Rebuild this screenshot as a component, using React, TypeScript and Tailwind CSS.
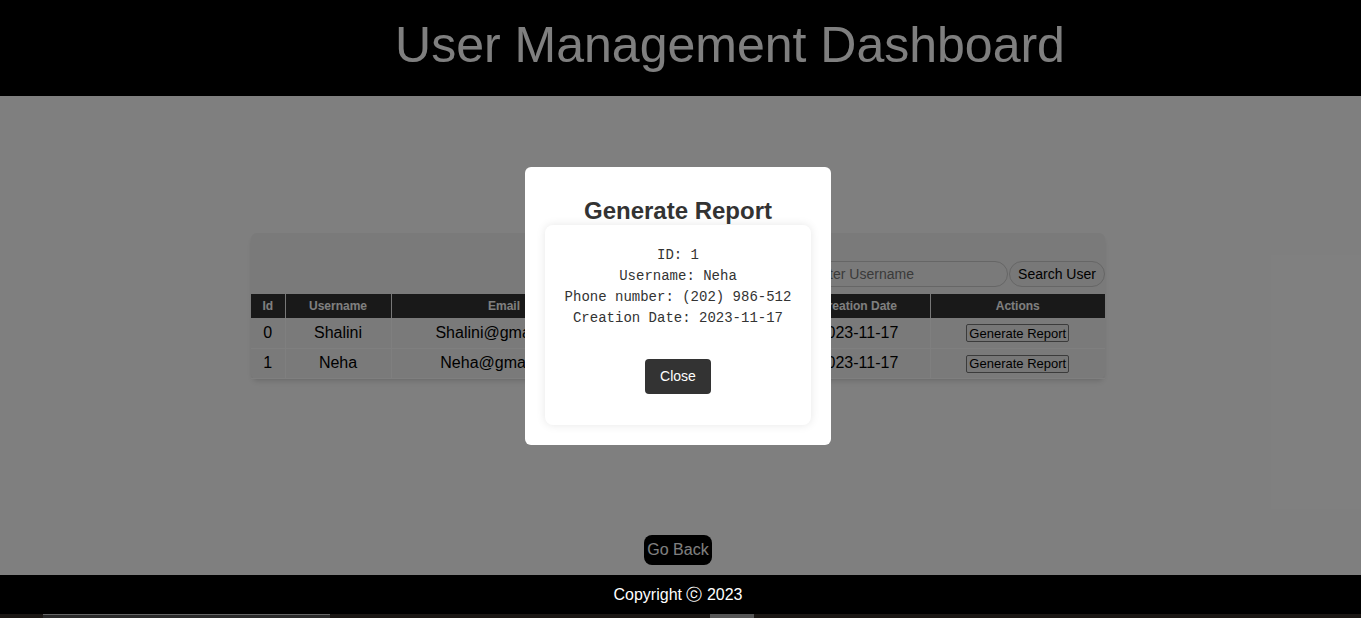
import React from 'react';

const users = [
  { id: 0, username: 'Shalini', email: 'Shalini@gmail.com', phone: '(202) 555-0143', date: '2023-11-17' },
  { id: 1, username: 'Neha', email: 'Neha@gmail.com', phone: '(202) 986-512', date: '2023-11-17' },
];

const App = () => {
  const selected = users[1];

  return (
    <div className="relative flex h-[618px] w-[1361px] flex-col overflow-hidden bg-white font-['Liberation_Sans',Arial,sans-serif] text-black">
      {/* header */}
      <header className="flex h-[96px] shrink-0 items-center justify-center bg-black pb-[6px] pl-[99px]">
        <h1 className="text-[50px] leading-none text-white">User Management Dashboard</h1>
      </header>

      {/* main */}
      <main className="flex h-[479px] shrink-0 flex-col items-center pr-[5px] pt-[137px]">
        <div className="w-[854px] rounded-md bg-[#f4f4f4] pt-[28px] shadow-md">
          <div className="mb-[7px] flex justify-end">
            <input
              placeholder="Enter Username"
              className="h-[26px] w-[207px] rounded-full border border-[#ccc] bg-[#f4f4f4] px-[10px] text-[14px] placeholder:text-[#757575] outline-none"
            />
            <button className="ml-[1px] h-[26px] w-[96px] rounded-full border border-[#ccc] bg-[#f0f0f0] text-[14px] text-black">
              Search User
            </button>
          </div>
          <table className="w-full table-fixed border-collapse text-center">
            <colgroup>
              <col className="w-[34px]" />
              <col className="w-[106px]" />
              <col className="w-[226px]" />
              <col className="w-[169px]" />
              <col className="w-[144px]" />
              <col className="w-[175px]" />
            </colgroup>
            <thead>
              <tr className="h-[24px] bg-[#333] text-[12px] font-bold text-white">
                <th className="border-x border-[#eee] first:border-l-0 last:border-r-0">Id</th>
                <th className="border-x border-[#eee]">Username</th>
                <th className="border-x border-[#eee]">Email</th>
                <th className="border-x border-[#eee]">Phone number</th>
                <th className="border-x border-[#eee]">Creation Date</th>
                <th className="border-x border-[#eee] last:border-r-0">Actions</th>
              </tr>
            </thead>
            <tbody>
              {users.map((u) => (
                <tr key={u.id} className="h-[30px] border-b border-white text-[16px]">
                  <td className="border-r border-white">{u.id}</td>
                  <td className="border-r border-white">{u.username}</td>
                  <td className="border-r border-white">{u.email}</td>
                  <td className="border-r border-white">{u.phone}</td>
                  <td className="border-r border-white">{u.date}</td>
                  <td>
                    <button className="h-[18px] rounded-[2px] border border-[#767676] bg-[#efefef] px-[2px] text-[13px] leading-none text-black">
                      Generate Report
                    </button>
                  </td>
                </tr>
              ))}
            </tbody>
          </table>
        </div>

        <button className="mb-[10px] mt-auto h-[30px] rounded-lg bg-black px-[3px] text-[16px] text-white">
          Go Back
        </button>
      </main>

      {/* footer */}
      <footer className="relative z-20 flex h-[39px] shrink-0 items-center justify-center bg-black pr-[5px] text-[16px] text-white">
        Copyright ⓒ 2023
      </footer>
      <div className="relative z-20 flex h-[4px] shrink-0 bg-[#1b1714]">
        <div className="ml-[43px] w-[287px] border-t border-[#666] bg-[#2a2a2a]" />
        <div className="ml-[380px] w-[44px] bg-[#555]" />
      </div>

      {/* modal overlay */}
      <div className="absolute inset-0 z-10 flex items-center justify-center bg-black/50 pb-[6px] pr-[5px]">
        <div className="w-[306px] rounded-md bg-white px-5 pb-5 pt-[30px] text-center">
          <h2 className="text-[24px] font-bold leading-[28px] text-[#333]">Generate Report</h2>
          <div className="rounded-lg bg-white px-2 pb-[31px] pt-5 shadow-[0_0_10px_rgba(0,0,0,0.1)]">
            <div className="font-['Liberation_Mono','Courier_New',monospace] text-[14px] leading-[21px] text-[#333]">
              <p>ID: {selected.id}</p>
              <p>Username: {selected.username}</p>
              <p>Phone number: {selected.phone}</p>
              <p>Creation Date: {selected.date}</p>
            </div>
            <button className="mt-[30px] h-[35px] rounded bg-[#333] px-[15px] text-[14px] text-white">Close</button>
          </div>
        </div>
      </div>
    </div>
  );
};

export default App;
